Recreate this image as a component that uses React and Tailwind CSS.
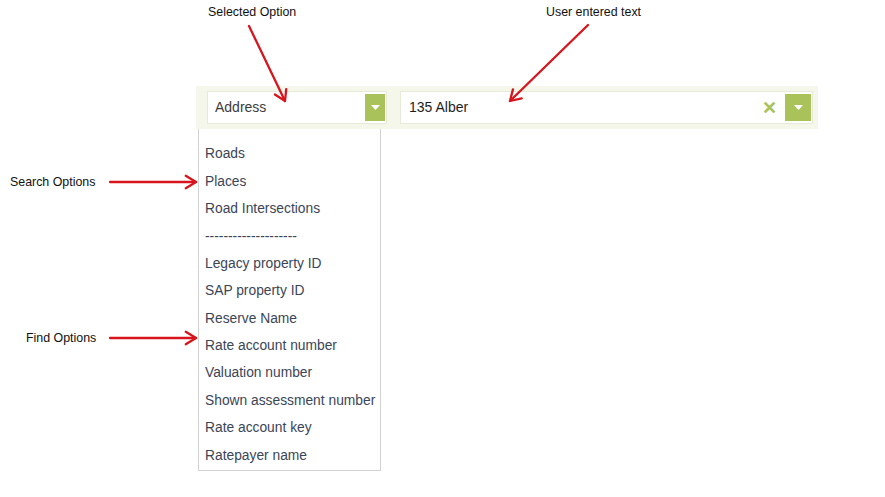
import React from "react";

const searchOptions = ["Roads", "Places", "Road Intersections", "--------------------"];
const findOptions = [
  "Legacy property ID",
  "SAP property ID",
  "Reserve Name",
  "Rate account number",
  "Valuation number",
  "Shown assessment number",
  "Rate account key",
  "Ratepayer name",
];

// annotation arrows: [x1, y1, x2, y2], tip at (x2, y2)
const arrows = [
  [249, 26, 285, 101],
  [588, 25, 510, 101],
  [110, 182, 196, 182],
  [110, 338, 196, 338],
];

const Arrow = ({ x1, y1, x2, y2 }) => {
  const a = Math.atan2(y2 - y1, x2 - x1);
  const len = 12;
  const spread = 0.55;
  const h1 = [x2 - len * Math.cos(a - spread), y2 - len * Math.sin(a - spread)];
  const h2 = [x2 - len * Math.cos(a + spread), y2 - len * Math.sin(a + spread)];
  return (
    <g stroke="#d8141c" strokeWidth="2.3" fill="none" strokeLinecap="round" strokeLinejoin="round">
      <line x1={x1} y1={y1} x2={x2} y2={y2} />
      <polyline points={`${h1[0]},${h1[1]} ${x2},${y2} ${h2[0]},${h2[1]}`} />
    </g>
  );
};

const Caret = () => (
  <svg width="9" height="5" viewBox="0 0 9 5">
    <path d="M0 0 L9 0 L4.5 5 Z" fill="#ffffff" />
  </svg>
);

const App = () => {
  return (
    <div className="relative w-[885px] h-[497px] bg-white overflow-hidden font-['Liberation_Sans',Arial,sans-serif]">
      {/* Widget */}
      <div className="pt-[86px] pl-[196px]">
        <div className="w-[622px] h-[43px] bg-[#f4f7ea] flex items-center gap-[13px] pl-[11px] pr-[5px]">
          <div className="w-[180px] h-[33px] bg-white border border-[#e6ead8] flex items-center justify-between pl-[7px] pr-[1px]">
            <span className="text-[14px] text-[#3c3c3c]">Address</span>
            <div className="w-[20px] h-[27px] bg-[#a9c25a] flex items-center justify-center">
              <Caret />
            </div>
          </div>
          <div className="flex-1 h-[33px] bg-white border border-[#e6ead8] flex items-center pl-[8px] pr-[1px]">
            <span className="flex-1 text-[14px] text-[#1e1e1e]">135 Alber</span>
            <span className="text-[#a9c25a] text-[18px] font-bold leading-none mr-[8px]">✕</span>
            <div className="w-[26px] h-[27px] bg-[#a9c25a] flex items-center justify-center">
              <Caret />
            </div>
          </div>
        </div>

        {/* Dropdown list */}
        <div className="ml-[2px] w-[183px] border border-t-0 border-[#d2d2d2] pt-[12px] pb-0 pl-[6px] text-[13.8px] text-[#3a4556]">
          {searchOptions.concat(findOptions).map((opt, i) => (
            <div key={i} className="h-[27.4px] flex items-center whitespace-nowrap">
              {opt}
            </div>
          ))}
        </div>
      </div>

      {/* Annotations */}
      <span className="absolute left-[208px] top-[3px] text-[12.4px] text-[#111]">Selected Option</span>
      <span className="absolute left-[546px] top-[3px] text-[12.4px] text-[#111]">User entered text</span>
      <span className="absolute left-[10px] top-[173px] text-[12.4px] text-[#111]">Search Options</span>
      <span className="absolute left-[26px] top-[329px] text-[12.4px] text-[#111]">Find Options</span>
      <svg className="absolute inset-0 pointer-events-none" width="885" height="497" viewBox="0 0 885 497">
        {arrows.map(([x1, y1, x2, y2], i) => (
          <Arrow key={i} x1={x1} y1={y1} x2={x2} y2={y2} />
        ))}
      </svg>
    </div>
  );
};

export default App;
